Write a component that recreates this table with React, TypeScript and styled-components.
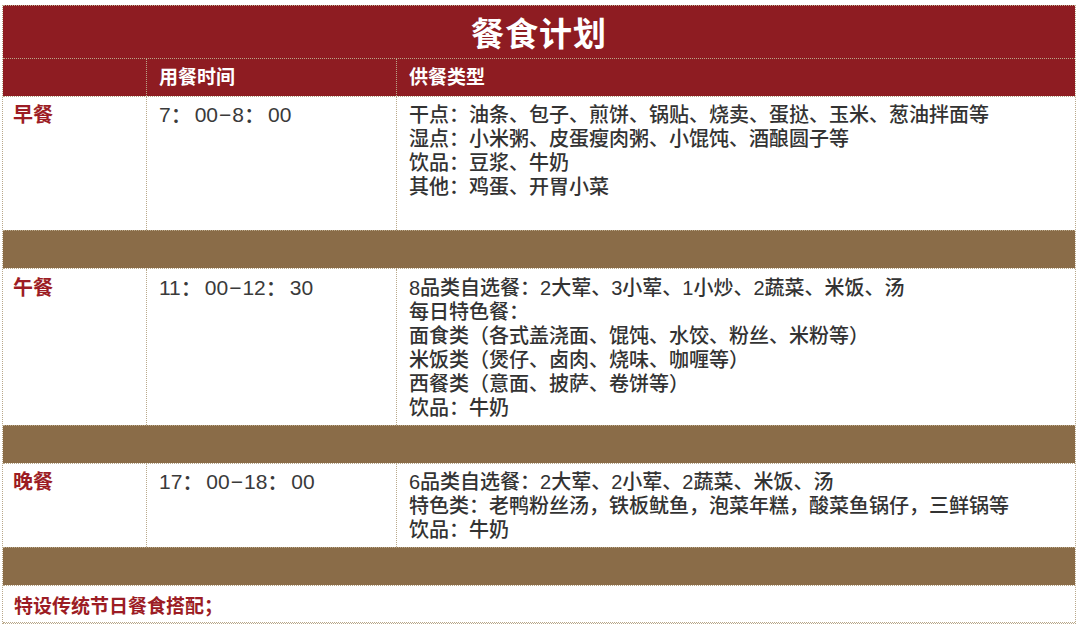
import React from "react";
import styled, { createGlobalStyle } from "styled-components";

const Global = createGlobalStyle`
  html, body { margin: 0; padding: 0; background: #ffffff; }
  body { font-family: "Liberation Sans", "Noto Sans CJK SC", "Noto Sans", sans-serif; }
  * { box-sizing: border-box; }
`;

const RED = "#8e1c22";
const BROWN = "#8a6c48";
const LINE = "#b9a88a";

const Page = styled.div`
  width: 1080px;
  height: 629px;
  padding: 5px 0 0 2px;
`;

const Table = styled.div`
  width: 1074px;
  border: 1px dotted ${LINE};
  border-top: 0;
  display: flex;
  flex-direction: column;
`;

const TitleRow = styled.div`
  height: 53px;
  background: ${RED};
  border-top: 1px dotted ${LINE};
  color: #ffffff;
  font-family: "Noto Sans CJK SC", sans-serif;
  font-size: 33px;
  font-weight: 700;
  display: flex;
  align-items: center;
  justify-content: center;
  letter-spacing: 1px;
`;

const Row = styled.div<{ $h: number; $bg?: string }>`
  height: ${(p) => p.$h}px;
  display: grid;
  grid-template-columns: 144px 250px 1fr;
  border-top: 1px dotted ${LINE};
  background: ${(p) => p.$bg || "#ffffff"};
`;

const Cell = styled.div<{ $head?: boolean; $pl?: number; $pt?: number }>`
  border-right: 1px dotted ${LINE};
  padding: ${(p) => (p.$head ? 0 : p.$pt ?? 6)}px 8px 0 ${(p) => p.$pl ?? 12}px;
  display: flex;
  flex-direction: column;
  justify-content: ${(p) => (p.$head ? "center" : "flex-start")};
  font-size: ${(p) => (p.$head ? 19 : 20)}px;
  line-height: 24px;
  font-weight: ${(p) => (p.$head ? 700 : 500)};
  color: ${(p) => (p.$head ? "#ffffff" : "#333333")};
  white-space: nowrap;
  &:last-child { border-right: 0; }
`;

const MealLabel = styled.span`
  color: #9c1c24;
  font-weight: 700;
`;

const Time = styled.div`
  font-size: 21px;
  line-height: 24px;
  color: #3a3a3a;
`;

const Colon = styled.span`
  margin-right: 3px;
`;

const Dash = styled.span`
  margin: 0 1px;
`;

const Band = styled.div`
  height: 38px;
  background: ${BROWN};
  border-top: 1px dotted ${LINE};
`;

const Footer = styled.div`
  height: 38px;
  border-top: 1px dotted ${LINE};
  border-bottom: 1px dotted ${LINE};
  display: flex;
  align-items: center;
  padding-left: 11px;
  font-size: 19px;
  font-weight: 700;
  color: #9c1c24;
`;

const meals = [
  {
    name: "早餐",
    from: ["7", "00"],
    to: ["8", "00"],
    h: 134,
    pt: 6,
    lines: [
      "干点：油条、包子、煎饼、锅贴、烧卖、蛋挞、玉米、葱油拌面等",
      "湿点：小米粥、皮蛋瘦肉粥、小馄饨、酒酿圆子等",
      "饮品：豆浆、牛奶",
      "其他：鸡蛋、开胃小菜",
    ],
  },
  {
    name: "午餐",
    from: ["11", "00"],
    to: ["12", "30"],
    h: 157,
    pt: 7,
    lines: [
      "8品类自选餐：2大荤、3小荤、1小炒、2蔬菜、米饭、汤",
      "每日特色餐：",
      "面食类（各式盖浇面、馄饨、水饺、粉丝、米粉等）",
      "米饭类（煲仔、卤肉、烧味、咖喱等）",
      "西餐类（意面、披萨、卷饼等）",
      "饮品：牛奶",
    ],
  },
  {
    name: "晚餐",
    from: ["17", "00"],
    to: ["18", "00"],
    h: 84,
    pt: 6,
    lines: [
      "6品类自选餐：2大荤、2小荤、2蔬菜、米饭、汤",
      "特色类：老鸭粉丝汤，铁板鱿鱼，泡菜年糕，酸菜鱼锅仔，三鲜锅等",
      "饮品：牛奶",
    ],
  },
];

export default function App() {
  return (
    <Page>
      <Global />
      <Table>
        <TitleRow>餐食计划</TitleRow>
        <Row $h={38} $bg={RED}>
          <Cell $head />
          <Cell $head>用餐时间</Cell>
          <Cell $head>供餐类型</Cell>
        </Row>
        {meals.map((m) => (
          <React.Fragment key={m.name}>
            <Row $h={m.h}>
              <Cell $pl={10} $pt={m.pt}>
                <MealLabel>{m.name}</MealLabel>
              </Cell>
              <Cell $pt={m.pt}>
                <Time>
                  {m.from[0]}
                  <Colon>：</Colon>
                  {m.from[1]}
                  <Dash>−</Dash>
                  {m.to[0]}
                  <Colon>：</Colon>
                  {m.to[1]}
                </Time>
              </Cell>
              <Cell $pt={m.pt}>
                {m.lines.map((l) => (
                  <div key={l}>{l}</div>
                ))}
              </Cell>
            </Row>
            <Band />
          </React.Fragment>
        ))}
        <Footer>特设传统节日餐食搭配；</Footer>
      </Table>
    </Page>
  );
}
